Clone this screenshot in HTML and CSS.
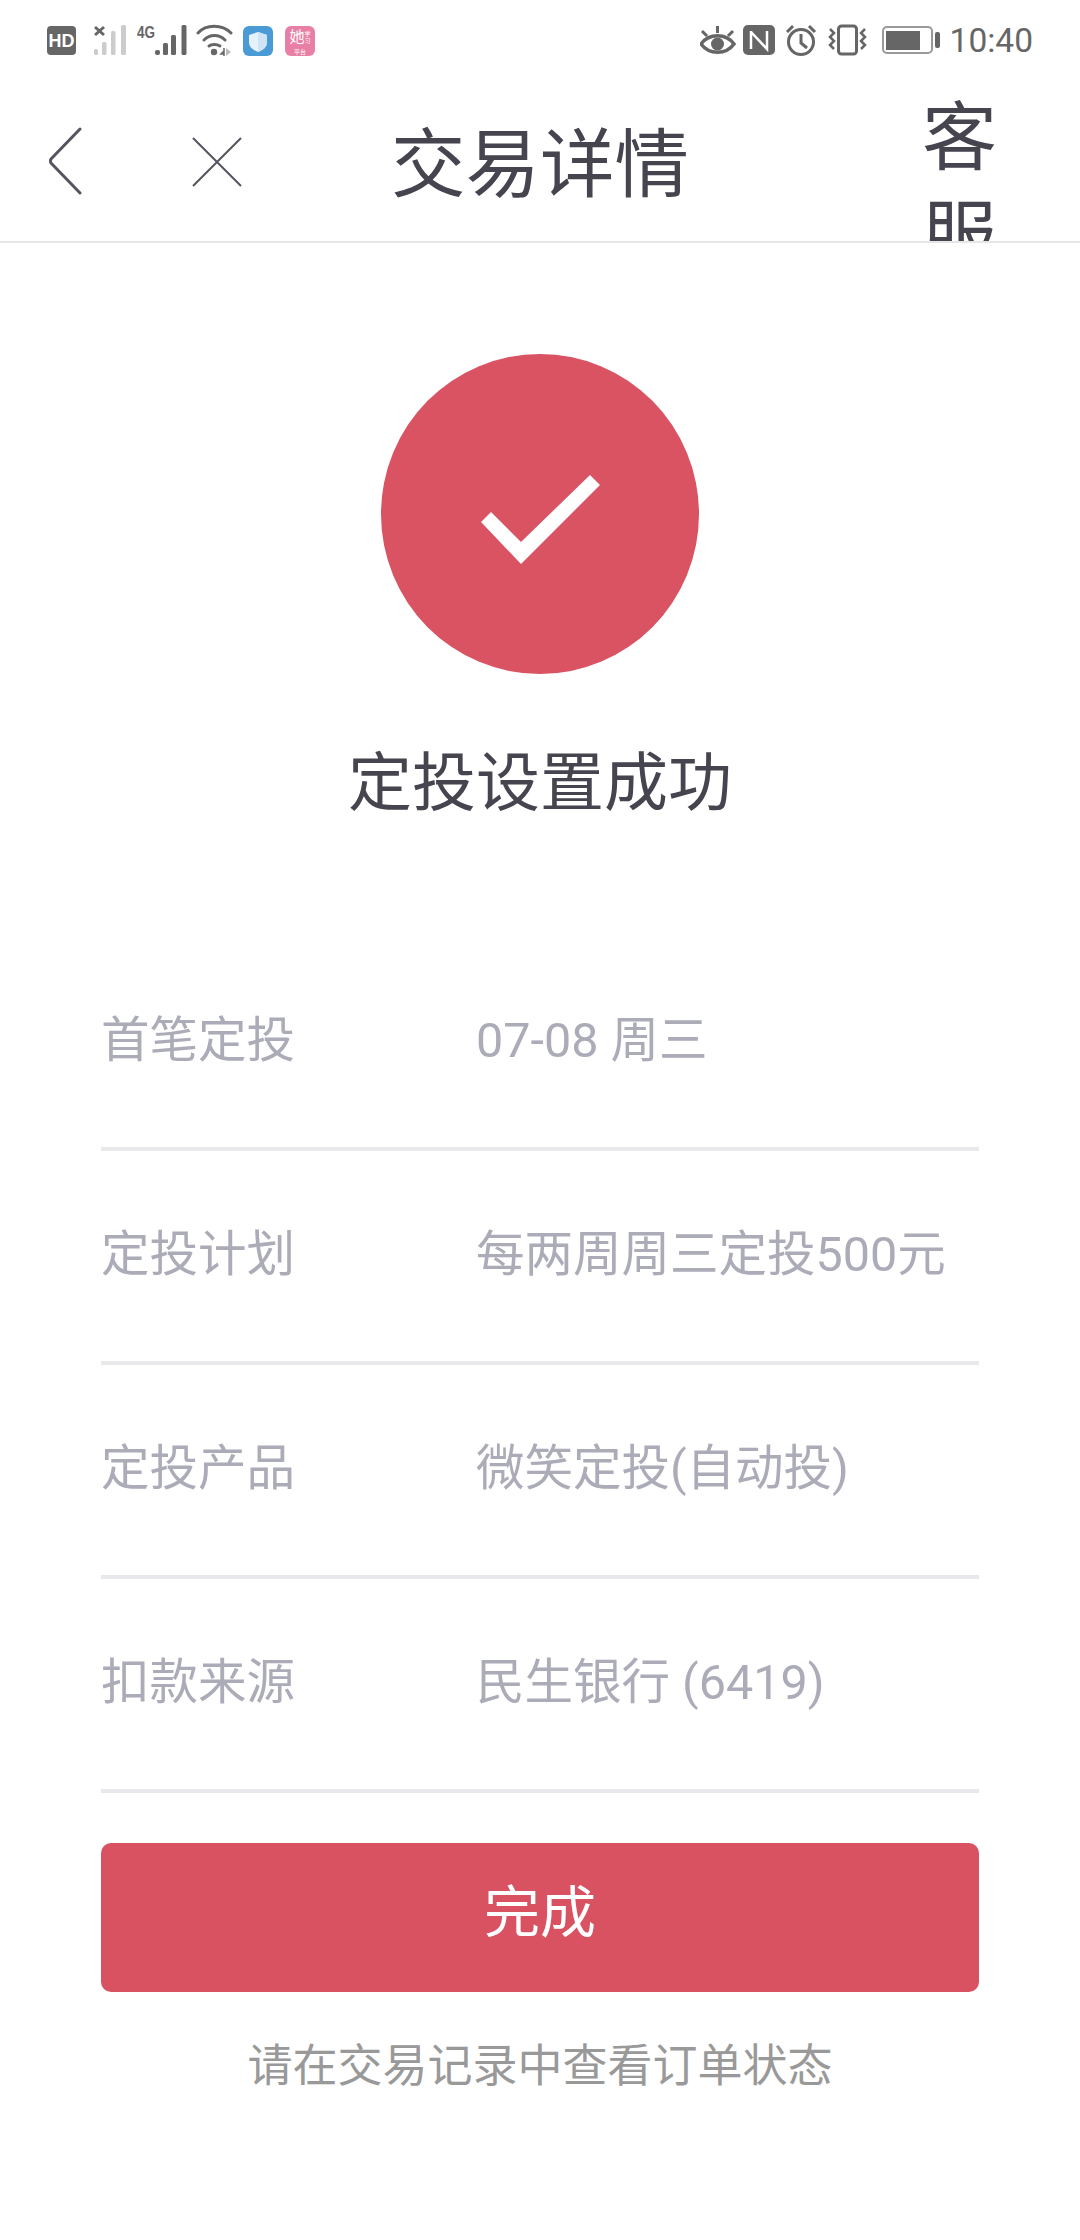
FILE: index.html
```html
<!DOCTYPE html>
<html lang="zh-CN">
<head>
	<meta charset="UTF-8">
	<title>交易详情</title>
	<link rel="stylesheet" href="styles.css">
</head>
<body>
	<div class="statusBar">
		<div class="statusGroup">
			<svg width="46" height="80" viewBox="0 0 46 80">
				<rect x="0" y="26" width="29" height="29" rx="4" fill="#666"/>
				<text x="14.5" y="46.500" class="hdText">HD</text>
			</svg>
			<svg width="44" height="80" viewBox="0 0 44 80">
				<path d="M2 27l9 8M11 27l-9 8" stroke="#666" stroke-width="3" fill="none"/>
				<rect x="1" y="49" width="4" height="6" rx="1.5" fill="#ccc"/>
				<rect x="9" y="42" width="4.5" height="13" rx="1.5" fill="#ccc"/>
				<rect x="18" y="31" width="4.5" height="24" rx="1.5" fill="#ccc"/>
				<rect x="28" y="25" width="5" height="30" rx="1.5" fill="#ccc"/>
			</svg>
			<svg width="59" height="80" viewBox="0 0 59 80">
				<text x="0" y="38" class="netText" textLength="18" lengthAdjust="spacingAndGlyphs">4G</text>
				<rect x="18" y="50" width="5" height="5" rx="2" fill="#666"/>
				<rect x="26" y="43" width="5" height="12" rx="1.5" fill="#666"/>
				<rect x="34" y="35" width="5" height="20" rx="1.5" fill="#666"/>
				<rect x="44.500" y="25" width="5" height="30" rx="1.5" fill="#666"/>
			</svg>
			<svg width="47" height="80" viewBox="0 0 47 80">
				<path d="M2 33C10 24 26 24 35 33M8 40C14 34 23 34 29 40" stroke="#666" stroke-width="3" fill="none" stroke-linecap="round"/>
				<path d="M13 46C15.500 44 21 44 24 46" stroke="#666" stroke-width="3" fill="none" stroke-linecap="round"/>
				<circle cx="18" cy="52" r="3.200" fill="#666"/>
				<path d="M28 51l-3 3h3zM28 48v8" stroke="#666" stroke-width="1.500" fill="none"/>
				<path d="M30 48l5 4-5 4z" fill="#bbb"/>
			</svg>
			<svg width="42" height="80" viewBox="0 0 42 80">
				<rect x="0" y="26" width="30" height="30" rx="6" fill="#4a9ad6"/>
				<path d="M15 32l9 3v7c0 5-4 8-9 10-5-2-9-5-9-10v-7z" fill="#e6f2fb"/>
				<path d="M15 32l9 3v7c0 5-4 8-9 10z" fill="#cfe4f5"/>
			</svg>
			<div class="appIcon">
				<div class="appTop"><span class="appMain">她</span><span class="appSub">学习</span></div>
				<span class="appFoot">平台</span>
			</div>
		</div>
		<div class="statusGroup">
			<svg width="43" height="80" viewBox="0 0 43 80">
				<path d="M1 44C9 33 26 33 34 44C26 55 9 55 1 44z" stroke="#666" stroke-width="3.500" fill="none"/>
				<circle cx="17.500" cy="44" r="6.500" fill="#666"/>
				<path d="M2 31l5 5M33 31l-5 5M17.500 26v7" stroke="#666" stroke-width="3" fill="none"/>
			</svg>
			<svg width="43" height="80" viewBox="0 0 43 80">
				<rect x="0" y="25" width="32" height="30" rx="5" fill="#666"/>
				<path d="M8 31V49M8 32L24 49V31" stroke="#fff" stroke-width="2.500" fill="none"/>
			</svg>
			<svg width="42" height="80" viewBox="0 0 42 80">
				<circle cx="15" cy="42" r="12.500" stroke="#666" stroke-width="3" fill="none"/>
				<path d="M15 34V43L21 48" stroke="#666" stroke-width="3" fill="none"/>
				<path d="M1 32l6-6M29 32l-6-6" stroke="#666" stroke-width="3" fill="none"/>
			</svg>
			<svg width="54" height="80" viewBox="0 0 54 80">
				<rect x="10.500" y="26" width="18" height="28" rx="3" stroke="#666" stroke-width="3" fill="none"/>
				<path d="M2 29l4 4-4 4 4 4-4 4 4 4M37 29l-4 4 4 4-4 4 4 4-4 4" stroke="#666" stroke-width="2.500" fill="none"/>
			</svg>
			<svg width="68" height="80" viewBox="0 0 68 80">
				<rect x="1" y="27" width="49" height="26" rx="4" stroke="#999" stroke-width="2" fill="none"/>
				<rect x="4" y="31" width="34" height="19" fill="#666"/>
				<rect x="53" y="32" width="5" height="16" rx="2" fill="#666"/>
			</svg>
			<span class="clock">10:40</span>
		</div>
	</div>

	<header class="navBar">
		<svg class="backIcon" width="36" height="68" viewBox="0 0 36 68">
			<path d="M33 2L4 32Q3 34 4 36L33 66" stroke="#56555f" stroke-width="3" fill="none" stroke-linecap="round" stroke-linejoin="round"/>
		</svg>
		<svg class="closeIcon" width="50" height="50" viewBox="0 0 50 50">
			<path d="M1 1L49 49M49 1L1 49" stroke="#56555f" stroke-width="2" fill="none"/>
		</svg>
		<h1 class="navTitle">交易详情</h1>
		<div class="navService">客服</div>
	</header>

	<section class="result">
		<div class="resultCircle">
			<svg class="resultCheck" width="120" height="92" viewBox="0 0 120 92">
				<path d="M1 47L11 37L41 67L110 0L120 10L41 89z" fill="#fff"/>
			</svg>
		</div>
		<h2 class="resultTitle">定投设置成功</h2>
	</section>

	<section class="details">
		<div class="detailRow">
			<span class="detailLabel">首笔定投</span>
			<span>07-08 周三</span>
		</div>
		<div class="detailRow">
			<span class="detailLabel">定投计划</span>
			<span>每两周周三定投500元</span>
		</div>
		<div class="detailRow">
			<span class="detailLabel">定投产品</span>
			<span>微笑定投(自动投)</span>
		</div>
		<div class="detailRow">
			<span class="detailLabel">扣款来源</span>
			<span>民生银行 (6419)</span>
		</div>
	</section>

	<button class="doneButton">完成</button>
	<p class="hint">请在交易记录中查看订单状态</p>
</body>
</html>
```

FILE: styles.css
```css
body{
	margin: 0;
	background-color: #fff;
	font-family: Roboto, "Noto Sans CJK SC", sans-serif;
}
.statusBar{
	display: flex;
	justify-content: space-between;
	height: 80px;
	padding: 0 47px 0 47px;
}
.statusGroup{
	display: flex;
	align-items: center;
}
.hdText{
	font-family: "Liberation Sans", sans-serif;
	font-size: 18px;
	font-weight: bold;
	fill: #fff;
	text-anchor: middle;
}
.netText{
	font-family: "Liberation Sans", sans-serif;
	font-size: 17px;
	font-weight: bold;
	fill: #666;
}
.appIcon{
	display: flex;
	flex-direction: column;
	align-items: center;
	width: 30px;
	height: 30px;
	margin-top: 2px;
	border-radius: 6px;
	background-color: #ea7fa5;
	color: #fff;
	overflow: hidden;
}
.appTop{
	display: flex;
	align-items: center;
	height: 22px;
}
.appMain{
	font-size: 15px;
	line-height: 18px;
}
.appSub{
	width: 6px;
	font-size: 6px;
	line-height: 7px;
}
.appFoot{
	font-size: 6px;
	line-height: 7px;
}
.clock{
	font-size: 33.5px;
	color: #666;
}
.navBar{
	display: flex;
	align-items: flex-start;
	height: 163px;
	border-bottom: 2px solid #e6e6e6;
	box-sizing: border-box;
	overflow: hidden;
	color: #45444f;
}
.backIcon{
	margin: 47px 0 0 47px;
}
.closeIcon{
	margin: 57px 0 0 109px;
}
.navTitle{
	margin: 46px 0 0 149px;
	font-size: 74.5px;
	font-weight: normal;
	line-height: 80px;
	white-space: nowrap;
}
.navService{
	width: 75px;
	margin: 9px 0 0 233px;
	font-size: 75px;
	line-height: 98px;
}
.result{
	display: flex;
	flex-direction: column;
	align-items: center;
}
.resultCircle{
	display: flex;
	align-items: center;
	justify-content: center;
	width: 318px;
	height: 320px;
	margin-top: 111px;
	border-radius: 50%;
	background-color: #d95363;
}
.resultCheck{
	margin-top: 13px;
}
.resultTitle{
	margin: 70px 0 0;
	font-size: 64px;
	font-weight: normal;
	line-height: 80px;
	color: #45444f;
}
.details{
	margin: 113px 101px 0;
}
.detailRow{
	display: flex;
	box-sizing: border-box;
	height: 214px;
	padding-top: 74px;
	border-bottom: 4px solid #e8e8ed;
	font-size: 48.5px;
	line-height: 60px;
	color: #acacb9;
}
.detailLabel{
	width: 375px;
}
.doneButton{
	display: block;
	width: 878px;
	height: 149px;
	margin: 50px 101px 0;
	padding-bottom: 22px;
	border: 0;
	border-radius: 10px;
	background-color: #d95262;
	font-family: inherit;
	font-size: 56px;
	color: #fff;
}
.hint{
	margin: 45px 0 0;
	font-size: 45px;
	line-height: 60px;
	text-align: center;
	color: #999;
}
```
